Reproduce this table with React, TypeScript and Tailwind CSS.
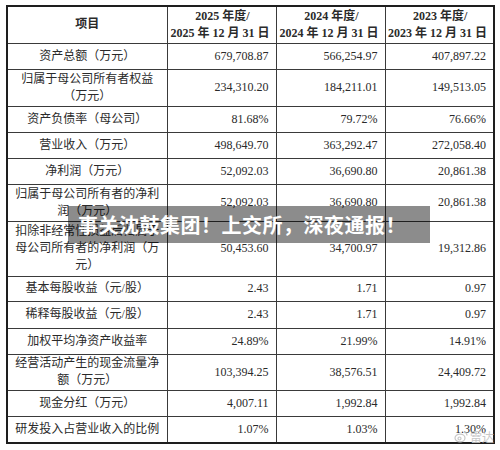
const rows: { label: string[]; h: string; v: [string, string, string] }[] = [
  { label: ["资产总额（万元）"], h: "h-[26px]", v: ["679,708.87", "566,254.97", "407,897.22"] },
  { label: ["归属于母公司所有者权益", "（万元）"], h: "h-[37px]", v: ["234,310.20", "184,211.01", "149,513.05"] },
  { label: ["资产负债率（母公司）"], h: "h-[26px]", v: ["81.68%", "79.72%", "76.66%"] },
  { label: ["营业收入（万元）"], h: "h-[26px]", v: ["498,649.70", "363,292.47", "272,058.40"] },
  { label: ["净利润（万元）"], h: "h-[26px]", v: ["52,092.03", "36,690.80", "20,861.38"] },
  { label: ["归属于母公司所有者的净利", "润（万元）"], h: "h-[37px]", v: ["52,092.03", "36,690.80", "20,861.38"] },
  { label: ["扣除非经常性损益后归属于", "母公司所有者的净利润（万", "元）"], h: "h-[55px]", v: ["50,453.60", "34,700.97", "19,312.86"] },
  { label: ["基本每股收益（元/股）"], h: "h-[25px]", v: ["2.43", "1.71", "0.97"] },
  { label: ["稀释每股收益（元/股）"], h: "h-[27px]", v: ["2.43", "1.71", "0.97"] },
  { label: ["加权平均净资产收益率"], h: "h-[26px]", v: ["24.89%", "21.99%", "14.91%"] },
  { label: ["经营活动产生的现金流量净", "额（万元）"], h: "h-[36px]", v: ["103,394.25", "38,576.51", "24,409.72"] },
  { label: ["现金分红（万元）"], h: "h-[26px]", v: ["4,007.11", "1,992.84", "1,992.84"] },
  { label: ["研发投入占营业收入的比例"], h: "h-[27px]", v: ["1.07%", "1.03%", "1.30%"] },
]

const years = ["2025", "2024", "2023"]

export default function App() {
  return (
    <div className="relative w-[500px] h-[450px] bg-white overflow-hidden font-['Liberation_Serif','Noto_Sans_CJK_SC',serif] text-[#2a2a2a]">
      <div className="pt-[5px] pl-[6px]">
        <table className="w-[487px] table-fixed border-collapse border-2 border-[#1e1e1e] text-[12px] leading-[17px]">
          <colgroup>
            <col className="w-[160px]" />
            <col className="w-[109px]" />
            <col className="w-[109px]" />
            <col className="w-[109px]" />
          </colgroup>
          <thead>
            <tr className="h-[37px]">
              <th className="border border-[#3a3a3a] text-center font-bold">项目</th>
              {years.map((y) => (
                <th key={y} className="border border-[#3a3a3a] text-right pr-[6px] font-bold whitespace-nowrap">
                  <div className="text-center pl-[8px]">{y} 年度/</div>
                  <div>{y} 年 12 月 31 日</div>
                </th>
              ))}
            </tr>
          </thead>
          <tbody>
            {rows.map((r, i) => (
              <tr key={i} className={r.h}>
                <td className="border border-[#3a3a3a] text-center px-[6px]">
                  {r.label.map((l, j) => (
                    <div key={j}>{l}</div>
                  ))}
                </td>
                {r.v.map((v, j) => (
                  <td key={j} className="border border-[#3a3a3a] text-right pr-[7px]">
                    {v}
                  </td>
                ))}
              </tr>
            ))}
          </tbody>
        </table>
      </div>

      <div className="absolute left-[68px] top-[206px] w-[362px] h-[37px] bg-black/45 flex items-center pl-[10px]">
        <span className="text-white font-bold text-[20px] tracking-[0.5px] font-['Noto_Sans_CJK_SC',sans-serif]">
          事关沈鼓集团！上交所，深夜通报！
        </span>
      </div>

      <div className="absolute right-[6px] bottom-[4px] flex items-center gap-[2px] text-[#c8c8c8] text-[12px] font-['Noto_Sans_CJK_SC',sans-serif]">
        <svg width="14" height="12" viewBox="0 0 14 12" fill="none" stroke="#c8c8c8" strokeWidth="1.2">
          <ellipse cx="6" cy="7" rx="5" ry="3.8" />
          <circle cx="5.5" cy="7.5" r="1.5" />
          <path d="M10 1.5a3 3 0 0 1 3 3" />
        </svg>
        <span>雷达</span>
      </div>
    </div>
  )
}
